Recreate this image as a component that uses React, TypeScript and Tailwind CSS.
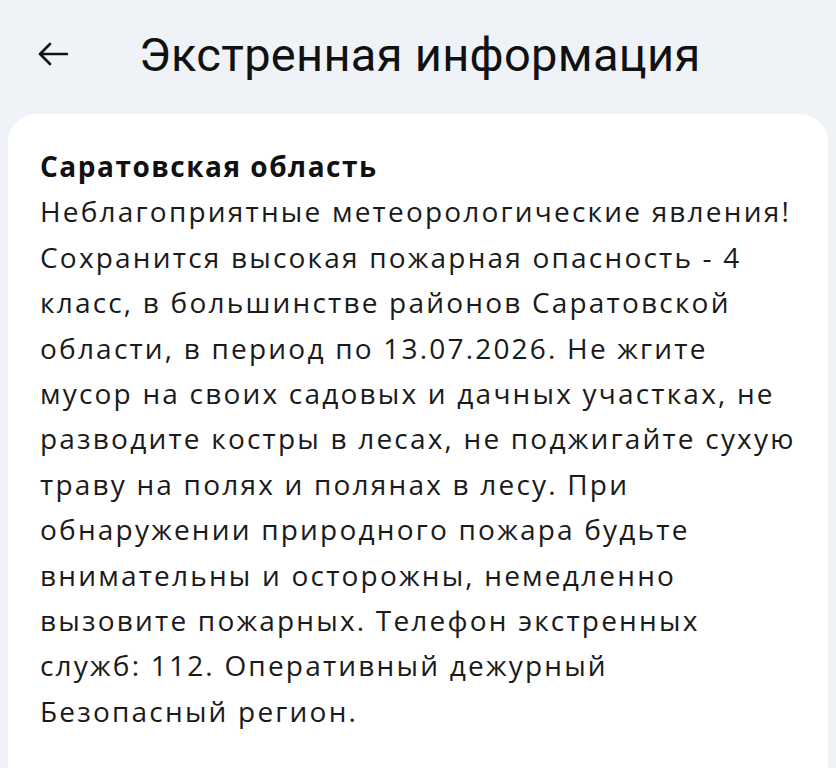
import React from 'react';

const lines = [
  'Неблагоприятные метеорологические явления!',
  'Сохранится высокая пожарная опасность - 4',
  'класс, в большинстве районов Саратовской',
  'области, в период по 13.07.2026. Не жгите',
  'мусор на своих садовых и дачных участках, не',
  'разводите костры в лесах, не поджигайте сухую',
  'траву на полях и полянах в лесу. При',
  'обнаружении природного пожара будьте',
  'внимательны и осторожны, немедленно',
  'вызовите пожарных. Телефон экстренных',
  'служб: 112. Оперативный дежурный',
  'Безопасный регион.',
];

const BackArrow: React.FC<{ className?: string }> = (props) => (
  <svg viewBox="0 0 30 24" fill="none" stroke="currentColor" strokeWidth={2.6} strokeLinecap="round" strokeLinejoin="round" {...props}>
    <path d="M29 12H2M12 2 2 12l10 10" />
  </svg>
);

export default function App() {
  return (
    <div className="h-[768px] overflow-hidden bg-[#eff3f8] font-['Open_Sans',sans-serif]">
      <header className="flex items-center h-[112px] pl-[38px] pb-[4px]">
        <BackArrow className="w-[30px] h-[24px] text-[#111]" />
        <h1 className="ml-[71px] font-['Roboto',sans-serif] text-[47px] leading-none text-[#111] tracking-[0.3px]">
          Экстренная информация
        </h1>
      </header>

      <main className="mx-[8px] mt-[2px] bg-white rounded-[28px] px-[32px] pt-[30px] pb-[40px] min-h-[700px]">
        <h2 className="text-[28px] leading-[45.4px] font-bold text-[#111] tracking-[1.5px]">Саратовская область</h2>
        <p className="text-[28px] leading-[45.4px] text-[#1a1a1a] tracking-[2.2px]">
          {lines.map((line) => (
            <span key={line} className="block whitespace-nowrap">
              {line}
            </span>
          ))}
        </p>
      </main>
    </div>
  );
}
